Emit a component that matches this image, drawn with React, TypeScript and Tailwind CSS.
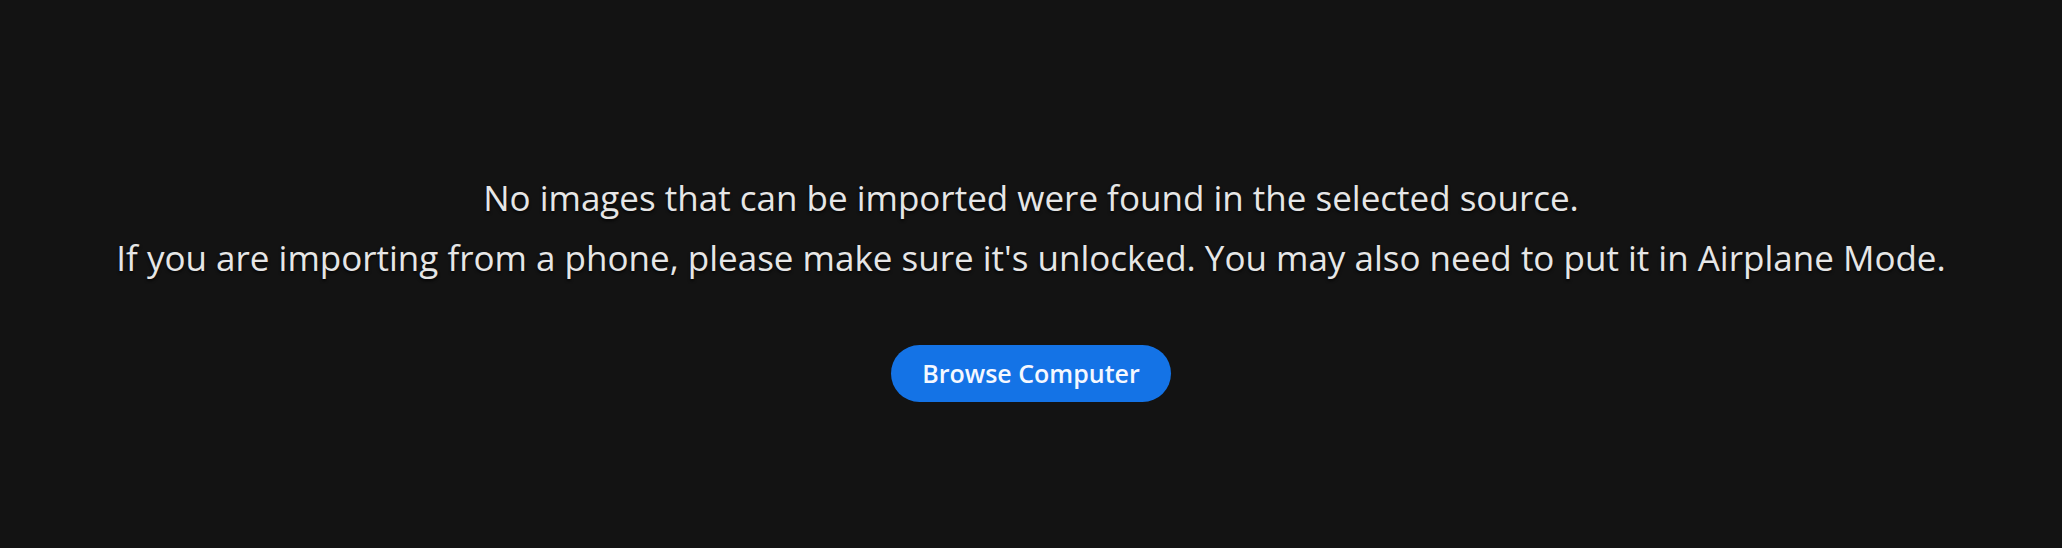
import React from 'react';

const App: React.FC = () => {
  return (
    <div className="w-full h-[548px] bg-[#131313] flex flex-col items-center pt-[168px] font-['Open_Sans',sans-serif]">
      <div className="text-center text-[#e6e6e6] text-[35px] leading-[60px] [text-shadow:0_2px_3px_rgba(0,0,0,0.7)]">
        <p>No images that can be imported were found in the selected source.</p>
        <p>If you are importing from a phone, please make sure it's unlocked. You may also need to put it in Airplane Mode.</p>
      </div>
      <button className="mt-[57px] w-[280px] h-[57px] rounded-full bg-[#1473e6] text-[#f5f8ff] text-[25px] font-semibold">
        Browse Computer
      </button>
    </div>
  );
};

export default App;
